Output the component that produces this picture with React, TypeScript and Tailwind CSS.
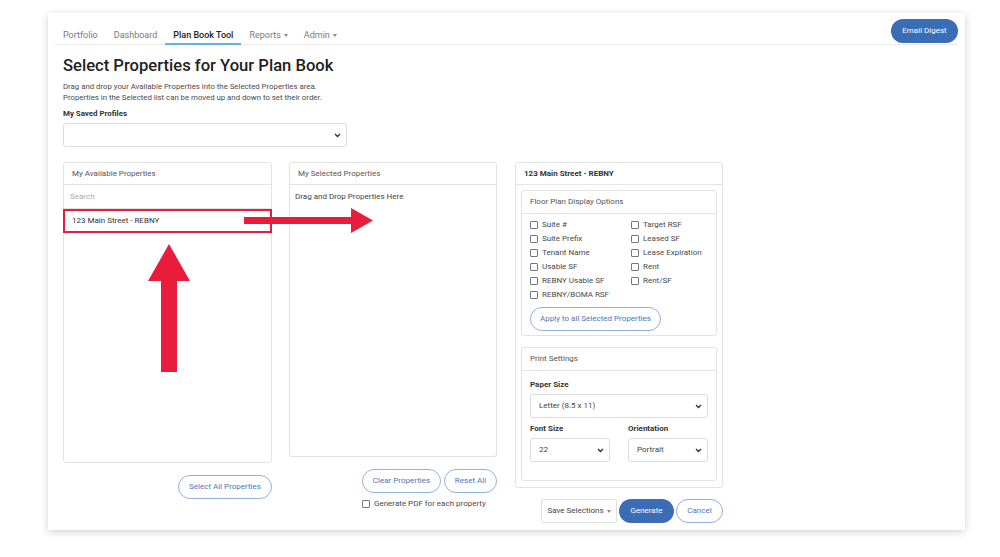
import React from "react";

// Small chevron used inside the select boxes
const Chevron = () => (
  <svg width="7" height="5" viewBox="0 0 7 5" className="shrink-0">
    <path d="M1 1l2.5 2.5L6 1" fill="none" stroke="#333" strokeWidth="1.4" />
  </svg>
);

const Caret = () => (
  <span className="ml-[3px] inline-block border-x-[2.5px] border-t-[3px] border-x-transparent border-t-[#888]" />
);

const SelectBox = ({ value, className }: { value: string; className: string }) => (
  <div
    className={`flex items-center justify-between rounded-[3px] border border-[#dcdcdc] bg-white pl-[8px] pr-[5px] text-[8px] text-[#444] ${className}`}
  >
    <span>{value}</span>
    <Chevron />
  </div>
);

const Check = ({ label }: { label: string }) => (
  <div className="flex h-[14px] items-center gap-[4px] text-[8px] text-[#4a4a4a]">
    <span className="h-[8px] w-[8px] rounded-[1px] border border-[#777] bg-white" />
    <span>{label}</span>
  </div>
);

const OutlineBtn = ({ label, className }: { label: string; className: string }) => (
  <button
    className={`rounded-full border border-[#8eb0e3] bg-white text-[8px] text-[#4c76bd] ${className}`}
  >
    {label}
  </button>
);

const navItems = ["Portfolio", "Dashboard", "Plan Book Tool", "Reports", "Admin"];

export default function App() {
  return (
    <div className="h-[557px] w-[1000px] overflow-hidden bg-white pt-[13px] pl-[48px] font-['Roboto',sans-serif]">
      <div className="h-[517px] w-[917px] bg-white px-[7px] shadow-[0_2px_8px_rgba(0,0,0,0.18)]">
        {/* nav */}
        <div className="flex h-[32px] justify-between border-b border-[#ececec]">
          <ul className="flex items-stretch">
            {navItems.map((n) => (
              <li
                key={n}
                className={`-mb-px flex items-end border-b-2 px-[8px] pb-[2px] text-[9px] leading-[12px] ${
                  n === "Plan Book Tool"
                    ? "border-[#62b1e8] font-medium text-[#222]"
                    : "border-transparent text-[#7a7a7a]"
                }`}
              >
                <span className="flex items-center">
                  {n}
                  {(n === "Reports" || n === "Admin") && <Caret />}
                </span>
              </li>
            ))}
          </ul>
          <button className="mt-[6px] h-[24px] w-[67px] self-start rounded-full bg-[#3b6db6] text-[8px] text-white">
            Email Digest
          </button>
        </div>

        {/* content */}
        <div className="relative px-[8px] pt-[10px]">
          <h1 className="text-[16.6px] font-medium leading-[22px] text-[#222]">
            Select Properties for Your Plan Book
          </h1>
          <p className="mt-[4px] text-[7.8px] leading-[11px] text-[#4a4a4a]">
            Drag and drop your Available Properties into the Selected Properties area.
            <br />
            Properties in the Selected list can be moved up and down to set their order.
          </p>
          <p className="mt-[5px] text-[7.9px] font-bold leading-[11px] text-[#333]">
            My Saved Profiles
          </p>
          <SelectBox value="" className="mt-[4px] h-[24px] w-[284px]" />

          <div className="mt-[15px] flex">
            {/* available */}
            <div className="flex w-[209px] flex-col items-end">
              <div className="h-[301px] w-full rounded-[3px] border border-[#e3e3e3]">
                <div className="flex h-[22px] items-center border-b border-[#e3e3e3] px-[8px] text-[8px] text-[#555]">
                  My Available Properties
                </div>
                <div className="flex h-[24px] items-center border-b border-[#e3e3e3] px-[6px] text-[8px] text-[#aaa]">
                  Search
                </div>
                <div className="-mx-px flex h-[24px] items-center border-2 border-[#ea1c3b] px-[7px] text-[8px] text-[#333]">
                  123 Main Street - REBNY
                </div>
              </div>
              <OutlineBtn label="Select All Properties" className="mt-[12px] h-[24px] w-[94px]" />
            </div>

            {/* selected */}
            <div className="ml-[17px] flex w-[208px] flex-col">
              <div className="h-[295px] w-full rounded-[3px] border border-[#e3e3e3]">
                <div className="flex h-[22px] items-center border-b border-[#e3e3e3] px-[8px] text-[8px] text-[#555]">
                  My Selected Properties
                </div>
                <div className="px-[5px] pt-[6px] text-[8px] text-[#444]">
                  Drag and Drop Properties Here
                </div>
              </div>
              <div className="mt-[12px] flex justify-end gap-[3px]">
                <OutlineBtn label="Clear Properties" className="h-[24px] w-[79px]" />
                <OutlineBtn label="Reset All" className="h-[24px] w-[53px]" />
              </div>
              <div className="mt-[4px] ml-[73px]">
                <Check label="Generate PDF for each property" />
              </div>
            </div>

            {/* property settings */}
            <div className="ml-[18px] flex w-[208px] flex-col items-end">
              <div className="h-[326px] w-full rounded-[3px] border border-[#e3e3e3]">
                <div className="flex h-[22px] items-center border-b border-[#e3e3e3] px-[8px] text-[8px] font-bold text-[#333]">
                  123 Main Street - REBNY
                </div>
                <div className="mx-[5px] mt-[5px] h-[146px] rounded-[3px] border border-[#e3e3e3]">
                  <div className="flex h-[23px] items-center border-b border-[#e3e3e3] px-[8px] text-[8px] text-[#555]">
                    Floor Plan Display Options
                  </div>
                  <div className="px-[8px] pt-[4px]">
                    <div className="grid grid-cols-[101px_1fr]">
                      <Check label="Suite #" />
                      <Check label="Target RSF" />
                      <Check label="Suite Prefix" />
                      <Check label="Leased SF" />
                      <Check label="Tenant Name" />
                      <Check label="Lease Expiration" />
                      <Check label="Usable SF" />
                      <Check label="Rent" />
                      <Check label="REBNY Usable SF" />
                      <Check label="Rent/SF" />
                      <Check label="REBNY/BOMA RSF" />
                    </div>
                    <OutlineBtn
                      label="Apply to all Selected Properties"
                      className="mt-[5px] h-[24px] w-[131px]"
                    />
                  </div>
                </div>
                <div className="mx-[5px] mt-[11px] h-[134px] rounded-[3px] border border-[#e3e3e3]">
                  <div className="flex h-[23px] items-center border-b border-[#e3e3e3] px-[8px] text-[8px] text-[#555]">
                    Print Settings
                  </div>
                  <div className="px-[8px]">
                    <p className="mt-[8px] text-[8px] font-bold leading-[11px] text-[#333]">Paper Size</p>
                    <SelectBox value="Letter (8.5 x 11)" className="mt-[4px] h-[24px] w-full" />
                    <div className="mt-[5px] grid grid-cols-2 gap-[18px]">
                      <div>
                        <p className="text-[8px] font-bold leading-[11px] text-[#333]">Font Size</p>
                        <SelectBox value="22" className="mt-[4px] h-[24px] w-full" />
                      </div>
                      <div>
                        <p className="text-[8px] font-bold leading-[11px] text-[#333]">Orientation</p>
                        <SelectBox value="Portrait" className="mt-[4px] h-[24px] w-full" />
                      </div>
                    </div>
                  </div>
                </div>
              </div>
              <div className="mt-[11px] flex items-center gap-[2px]">
                <button className="flex h-[24px] w-[76px] items-center justify-center rounded-[2px] border border-[#e0e0e0] bg-white text-[8px] text-[#444]">
                  Save Selections
                  <Caret />
                </button>
                <button className="h-[24px] w-[55px] rounded-full bg-[#3b6db6] text-[8px] text-white">
                  Generate
                </button>
                <OutlineBtn label="Cancel" className="h-[24px] w-[47px]" />
              </div>
            </div>
          </div>

          {/* annotation arrows */}
          <svg
            className="absolute left-[189px] top-[163px]"
            width="130"
            height="25"
            viewBox="0 0 130 25"
          >
            <path d="M0 9h107V0l22 12.5L107 25v-9H0z" fill="#ea1c3b" />
          </svg>
          <svg
            className="absolute left-[93px] top-[199px]"
            width="43"
            height="128"
            viewBox="0 0 43 128"
          >
            <path d="M21 0l21 37H29v91H13V37H0z" fill="#ea1c3b" />
          </svg>
        </div>
      </div>
    </div>
  );
}
